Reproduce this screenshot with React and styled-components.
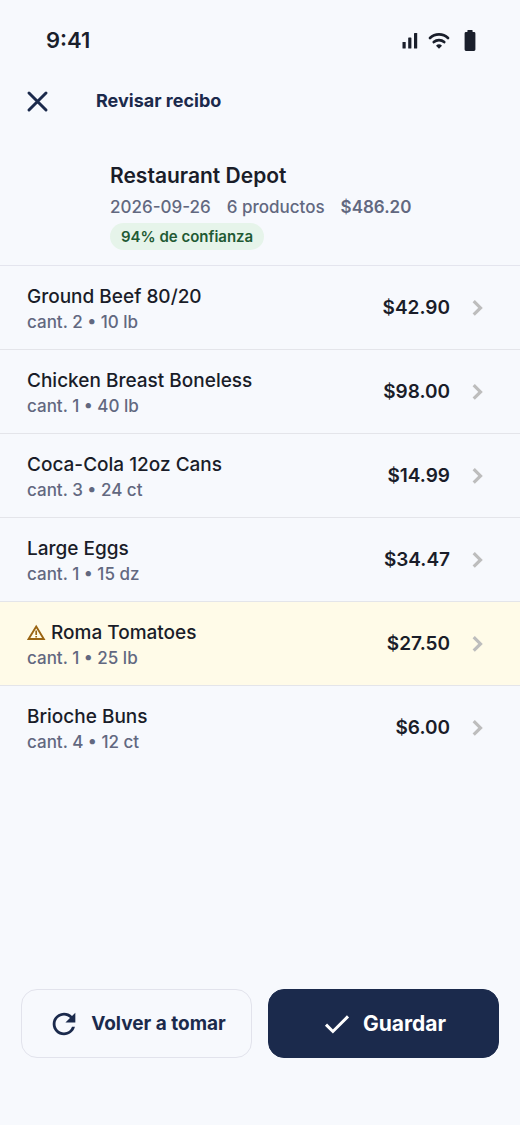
import React from "react";
import styled, { createGlobalStyle } from "styled-components";
import { MdRefresh } from "react-icons/md";

const items = [
  { name: "Ground Beef 80/20", detail: "cant. 2 • 10 lb", price: "$42.90" },
  { name: "Chicken Breast Boneless", detail: "cant. 1 • 40 lb", price: "$98.00" },
  { name: "Coca-Cola 12oz Cans", detail: "cant. 3 • 24 ct", price: "$14.99" },
  { name: "Large Eggs", detail: "cant. 1 • 15 dz", price: "$34.47" },
  { name: "Roma Tomatoes", detail: "cant. 1 • 25 lb", price: "$27.50", warning: true },
  { name: "Brioche Buns", detail: "cant. 4 • 12 ct", price: "$6.00" },
];

function StatusIcons() {
  return (
    <Indicators>
      <svg width="16" height="24" viewBox="0 0 16 24" fill="currentColor">
        <rect x="0.5" y="14" width="3.2" height="6.5" rx="0.6" />
        <rect x="6.2" y="9.5" width="3.2" height="11" rx="0.6" />
        <rect x="12" y="5" width="3.2" height="15.5" rx="0.6" />
      </svg>
      <svg width="22" height="24" viewBox="0 0 22 24" fill="none">
        <g stroke="currentColor" strokeWidth="2.7" strokeLinecap="round">
          <path d="M2 10a13 13 0 0 1 18 0" />
          <path d="M5.8 14.1a7.8 7.8 0 0 1 10.4 0" />
        </g>
        <path d="M11 20.8l-3-3a4.3 4.3 0 0 1 6 0z" fill="currentColor" />
      </svg>
      <svg width="12" height="24" viewBox="0 0 12 24" fill="currentColor">
        <path d="M4 2h4a.6.6 0 0 1 .6.6V4H10a1.4 1.4 0 0 1 1.4 1.4v16.2A1.4 1.4 0 0 1 10 23H2a1.4 1.4 0 0 1-1.4-1.4V5.4A1.4 1.4 0 0 1 2 4h1.4V2.6A.6.6 0 0 1 4 2z" />
      </svg>
    </Indicators>
  );
}

function CloseIcon() {
  return (
    <svg width="32" height="32" viewBox="0 0 32 32" stroke="currentColor" strokeWidth="3">
      <path d="M8 8l17 17M25 8L8 25" strokeLinecap="round" />
    </svg>
  );
}

function CheckIcon() {
  return (
    <svg width="32" height="32" viewBox="0 0 32 32" fill="none" stroke="currentColor" strokeWidth="3">
      <path d="M5 16.6l6.9 6.9L27 8.4" />
    </svg>
  );
}

function WarningIcon() {
  return (
    <svg width="19" height="18" viewBox="0 0 19 18" fill="none" stroke="#9a6412">
      <path d="M9.2 2.6L16.8 15H1.6z" strokeWidth="1.9" />
      <path d="M9.2 6.6v4.3M9.2 11.9v1.7" strokeWidth="1.7" />
    </svg>
  );
}

function Chevron() {
  return (
    <svg width="12" height="20" viewBox="0 0 12 20" fill="none" stroke="#bdbdbd">
      <path d="M1.7 3.1L8.5 9.9l-6.8 6.8" strokeWidth="3.2" />
    </svg>
  );
}

function App() {
  return (
    <>
      <GlobalStyle />
      <Screen>
        <StatusBar>
          <time>9:41</time>
          <StatusIcons />
        </StatusBar>
        <TopBar>
          <CloseButton type="button" aria-label="Cerrar">
            <CloseIcon />
          </CloseButton>
          <h1>Revisar recibo</h1>
        </TopBar>
        <Summary>
          <h2>Restaurant Depot</h2>
          <Meta>
            <span>2026-09-26</span>
            <span>6 productos</span>
            <strong>$486.20</strong>
          </Meta>
          <Badge>94% de confianza</Badge>
        </Summary>
        <List>
          {items.map((item) => (
            <li key={item.name}>
              <Row type="button" $warning={item.warning}>
                <Product>
                  <Name>
                    {item.warning && <WarningIcon />}
                    {item.name}
                  </Name>
                  <Detail>{item.detail}</Detail>
                </Product>
                <Price>{item.price}</Price>
                <Chevron />
              </Row>
            </li>
          ))}
        </List>
        <Actions>
          <ActionButton type="button">
            <MdRefresh size={34} />
            Volver a tomar
          </ActionButton>
          <ActionButton type="button" $primary>
            <CheckIcon />
            Guardar
          </ActionButton>
        </Actions>
      </Screen>
    </>
  );
}
export default App;

const GlobalStyle = createGlobalStyle`
  * {
    box-sizing: border-box;
  }

  body {
    margin: 0;
    background: #f7f9fd;
    color: #1a1d29;
    font-family: Inter, "Liberation Sans", sans-serif;
  }

  h1, h2, ul {
    margin: 0;
    padding: 0;
  }

  ul {
    list-style: none;
  }

  button {
    font-family: inherit;
    color: inherit;
    cursor: pointer;
  }

  svg {
    flex-shrink: 0;
  }
`;

const Screen = styled.main`
  display: flex;
  flex-direction: column;
  min-height: 100vh;
`;

const StatusBar = styled.div`
  display: flex;
  align-items: center;
  justify-content: space-between;
  padding: 24px 44px 0 46px;
  color: #1a1f2b;

  time {
    font-size: 22px;
    line-height: 32px;
    font-weight: 600;
  }
`;

const Indicators = styled.div`
  display: flex;
  align-items: center;
  gap: 12px;

  svg:nth-child(2) {
    margin-left: -2px;
    margin-right: 2px;
  }
`;

const TopBar = styled.header`
  display: flex;
  align-items: center;
  gap: 39px;
  height: 89px;
  padding: 0 17px;
  color: #1b2a4c;

  h1 {
    font-size: 18px;
    line-height: 24px;
    font-weight: 700;
  }
`;

const CloseButton = styled.button`
  display: flex;
  padding: 4px;
  border: 0;
  background: none;
`;

const Summary = styled.section`
  display: flex;
  flex-direction: column;
  align-items: flex-start;
  padding: 16px 24px 15px 110px;
  border-bottom: 1px solid #e4e5ee;

  h2 {
    font-size: 21px;
    line-height: 30px;
    font-weight: 600;
  }
`;

const Meta = styled.div`
  display: flex;
  gap: 16px;
  padding: 4px 0;
  font-size: 17px;
  line-height: 24px;
  color: #626880;

  span {
    font-weight: 500;
  }

  strong {
    font-weight: 600;
  }
`;

const Badge = styled.span`
  padding: 2px 11px;
  border-radius: 14px;
  background: #e6f4ea;
  color: #1f5a34;
  font-size: 15px;
  line-height: 23px;
  font-weight: 600;
`;

const List = styled.ul`
  flex: 1;

  li + li {
    border-top: 1px solid #e4e5ea;
  }
`;

const Row = styled.button`
  display: flex;
  align-items: center;
  width: 100%;
  padding: 17px 36px 16px 27px;
  border: 0;
  background: ${(props) => (props.$warning ? "#fffbe8" : "transparent")};
  text-align: left;
`;

const Product = styled.span`
  flex: 1;
  display: flex;
  flex-direction: column;
`;

const Name = styled.span`
  display: flex;
  align-items: center;
  gap: 5px;
  font-size: 19px;
  line-height: 28px;
  font-weight: 500;
`;

const Detail = styled.span`
  font-size: 17px;
  line-height: 22px;
  font-weight: 500;
  color: #626880;
`;

const Price = styled.span`
  margin-right: 22px;
  font-size: 19px;
  line-height: 28px;
  font-weight: 600;
`;

const Actions = styled.footer`
  display: grid;
  grid-template-columns: 1fr 1fr;
  gap: 16px;
  padding: 16px 21px 67px;
`;

const ActionButton = styled.button`
  display: flex;
  align-items: center;
  justify-content: center;
  gap: 10px;
  height: 69px;
  border: 1px solid ${(props) => (props.$primary ? "#1b2a4c" : "#e2e3ec")};
  border-radius: 16px;
  background: ${(props) => (props.$primary ? "#1b2a4c" : "transparent")};
  && {
    color: ${(props) => (props.$primary ? "#ffffff" : "#1b2a4c")};
  }
  font-size: ${(props) => (props.$primary ? "21px" : "19px")};
  font-weight: 700;
`;
